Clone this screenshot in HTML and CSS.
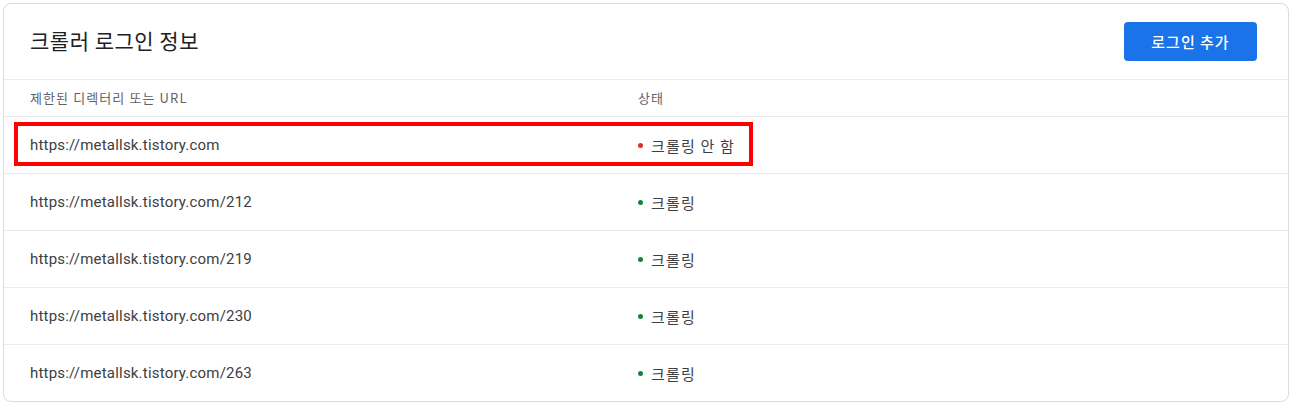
FILE: index.html
```html
<!DOCTYPE html>
<html>

<head lang="ko">
    <meta charset="utf-8" />
    <meta name="viewport" content="width=device-width, initial-scale=1" />
    <title>크롤러 로그인 정보</title>
    <link rel="stylesheet" href="styles.css">
</head>

<body>
    <div class="card">
        <div class="card-head">
            <h1>크롤러 로그인 정보</h1>
            <button class="add-btn">로그인 추가</button>
        </div>

        <div class="row head-row">
            <div class="cell">제한된 디렉터리 또는 URL</div>
            <div class="cell">상태</div>
        </div>

        <div class="row marked">
            <div class="cell url">https://metallsk.tistory.com</div>
            <div class="cell status"><span class="dot off"></span>크롤링 안 함</div>
            <div class="mark"></div>
        </div>
        <div class="row">
            <div class="cell url">https://metallsk.tistory.com/212</div>
            <div class="cell status"><span class="dot on"></span>크롤링</div>
        </div>
        <div class="row">
            <div class="cell url">https://metallsk.tistory.com/219</div>
            <div class="cell status"><span class="dot on"></span>크롤링</div>
        </div>
        <div class="row">
            <div class="cell url">https://metallsk.tistory.com/230</div>
            <div class="cell status"><span class="dot on"></span>크롤링</div>
        </div>
        <div class="row">
            <div class="cell url">https://metallsk.tistory.com/263</div>
            <div class="cell status"><span class="dot on"></span>크롤링</div>
        </div>
    </div>
</body>

</html>
```

FILE: styles.css
```css
body {
    margin: 0;
    padding: 3px 4px 0 3px;
    background-color: #fff;
    font-family: Roboto, "Noto Sans CJK KR", sans-serif;
    color: #3c4043;
}

.card {
    border: 1px solid #dadce0;
    border-radius: 8px;
    background-color: #fff;
    overflow: hidden;
}

.card-head {
    height: 75px;
    display: flex;
    align-items: center;
    justify-content: space-between;
    padding: 0 31px 0 26px;
    border-bottom: 1px solid #e8eaed;
}

.card-head h1 {
    margin: 0 0 3px 0;
    font-family: "Noto Sans CJK KR", sans-serif;
    font-size: 21px;
    font-weight: 400;
    color: #202124;
    letter-spacing: 0.5px;
}

.add-btn {
    width: 133px;
    height: 39px;
    border: none;
    border-radius: 4px;
    background-color: #1a73e8;
    color: #fff;
    font-family: "Noto Sans CJK KR", sans-serif;
    font-size: 15px;
    font-weight: 500;
    letter-spacing: 1px;
}

.row {
    position: relative;
    display: grid;
    grid-template-columns: 608px 1fr;
    align-items: center;
    height: 56px;
    border-top: 1px solid #e8eaed;
    font-size: 15px;
}

.card-head + .row {
    border-top: none;
}

.head-row {
    height: 36px;
    padding-bottom: 2px;
    box-sizing: border-box;
    font-size: 13px;
    color: #5f6368;
    font-family: "Noto Sans CJK KR", sans-serif;
    letter-spacing: 1.1px;
}

.cell {
    padding-left: 26px;
}

.url {
    letter-spacing: 0.2px;
}

.status {
    display: flex;
    align-items: center;
    font-family: "Noto Sans CJK KR", sans-serif;
    letter-spacing: 1.2px;
}

.dot {
    width: 5px;
    height: 5px;
    border-radius: 50%;
    margin-right: 8px;
}

.dot.off {
    background-color: #d93025;
}

.dot.on {
    background-color: #188038;
}

/* red annotation box drawn over the first row */
.mark {
    position: absolute;
    left: 10px;
    top: 5px;
    width: 731px;
    height: 36px;
    border: 4px solid #ff0000;
}
```
